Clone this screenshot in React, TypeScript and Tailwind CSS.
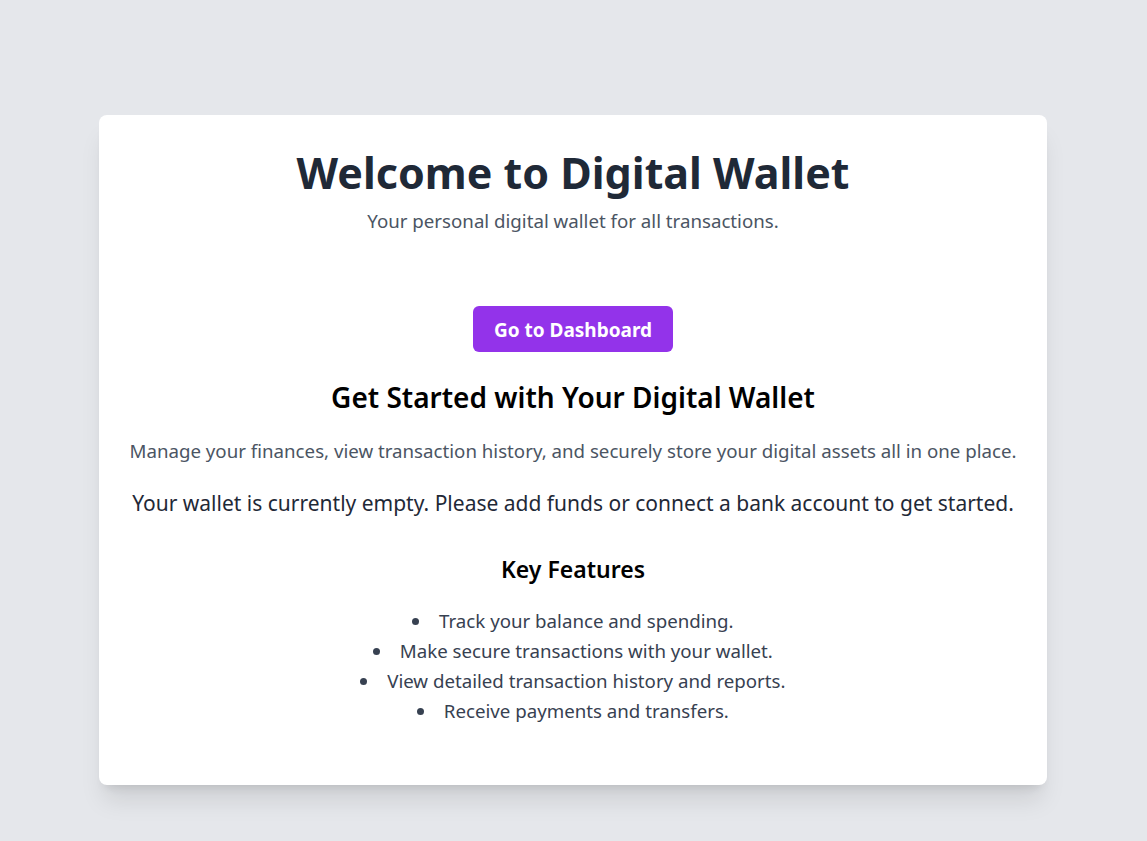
import React from "react";

export default function App() {
  const features = [
    "Track your balance and spending.",
    "Make secure transactions with your wallet.",
    "View detailed transaction history and reports.",
    "Receive payments and transfers.",
  ];
  return (
    <div
      className="min-h-screen w-full bg-[#e5e7eb] flex justify-start pl-[99px] pt-[115px]"
      style={{ fontFamily: '"Noto Sans", "Open Sans", sans-serif' }}
    >
      <div className="w-[948px] h-[670px] bg-white rounded-lg shadow-xl px-[30px] pt-[30px] text-center flex flex-col items-center">
        <h1 className="text-[43px] leading-[56px] font-bold text-[#1f2937]">Welcome to Digital Wallet</h1>
        <p className="mt-[6px] text-[18.7px] leading-[28px] text-[#4b5563]">Your personal digital wallet for all transactions.</p>
        <button className="mt-[71px] w-[200px] h-[46px] pt-[3px] rounded-md bg-[#9333ea] text-white font-bold text-[19px]">
          Go to Dashboard
        </button>
        <h2 className="mt-[27px] text-[28px] leading-[36px] font-semibold text-black">Get Started with Your Digital Wallet</h2>
        <p className="mt-[22px] text-[18.7px] leading-[28px] text-[#4b5563]">
          Manage your finances, view transaction history, and securely store your digital assets all in one place.
        </p>
        <p className="mt-[24px] text-[21px] leading-[28px] text-[#1f2937]">
          Your wallet is currently empty. Please add funds or connect a bank account to get started.
        </p>
        <h3 className="mt-[36px] text-[23px] leading-[32px] font-semibold text-black">Key Features</h3>
        <ul className="mt-[21px] list-disc list-inside text-[18.7px] leading-[30px] text-[#374151]">
          {features.map((f) => (
            <li key={f}>{f}</li>
          ))}
        </ul>
      </div>
    </div>
  );
}
